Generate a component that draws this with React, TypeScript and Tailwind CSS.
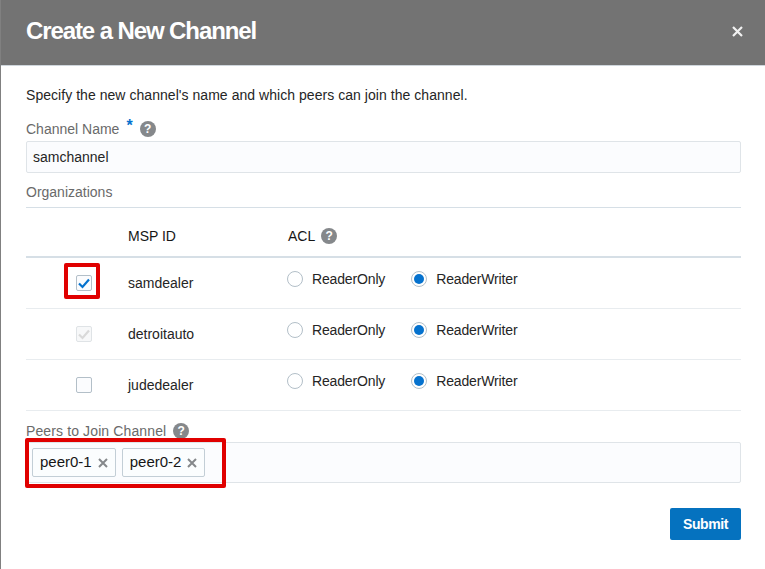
import React from 'react';

const orgs = [
  { name: 'samdealer', state: 'on', marked: true },
  { name: 'detroitauto', state: 'disabled', marked: false },
  { name: 'judedealer', state: 'off', marked: false },
];

function Help({ ml = 'ml-[7px]' }: { ml?: string }) {
  return (
    <span className={ml + ' flex h-4 w-4 items-center justify-center rounded-full bg-[#85888b] text-[12px] leading-none font-bold text-white'}>
      ?
    </span>
  );
}

function Check({ color }: { color: string }) {
  return (
    <svg width="14" height="14" viewBox="0 0 14 14" fill="none">
      <path d="M2 7.5 L5.5 11 L12 3.5" stroke={color} strokeWidth="2.2" />
    </svg>
  );
}

function Radio({ label, checked }: { label: string; checked?: boolean }) {
  return (
    <div className="flex items-center gap-[9px]">
      <span className="flex h-4 w-4 items-center justify-center rounded-full border border-[#b3bfc8] bg-white">
        {checked && <span className="h-[10px] w-[10px] rounded-full bg-[#0572ce]" />}
      </span>
      <span className="text-[14px] leading-4 tracking-[-0.15px] text-[#252525]">{label}</span>
    </div>
  );
}

function Tag({ label }: { label: string }) {
  return (
    <span className="flex h-[29px] items-center rounded-[2px] border border-[#c3ced6] bg-[#fbfdfe] pl-[7px] pr-[7px] text-[15px] text-[#161616]">
      {label}
      <svg className="ml-[6px]" width="10" height="10" viewBox="0 0 10 10" fill="none">
        <path d="M1 1 L9 9 M9 1 L1 9" stroke="#85888b" strokeWidth="2" />
      </svg>
    </span>
  );
}

export default function App() {
  return (
    <div className="h-[569px] w-[765px] overflow-hidden border-l border-[#808080] bg-white font-['Liberation_Sans',Arial,sans-serif]">
      <div className="flex h-[66px] items-center justify-between border-b border-[#cfd6dc] bg-[#737373] pl-[25px] pr-[22px]">
        <h1 className="mb-[4px] text-[24px] font-bold tracking-[-1.1px] text-white">Create a New Channel</h1>
        <svg className="mb-[2px]" width="11" height="11" viewBox="0 0 11 11" fill="none">
          <path d="M1 1 L10 10 M10 1 L1 10" stroke="#f2f2f2" strokeWidth="2.2" />
        </svg>
      </div>

      <div className="pl-[25px] pr-[24px]">
        <p className="mt-[20px] text-[14px] leading-[18px] tracking-[0.045px] text-[#252525]">
          Specify the new channel's name and which peers can join the channel.
        </p>

        <div className="mt-[17px] flex h-4 items-center text-[14px] text-[#6a6a6a]">
          Channel Name
          <span className="relative -top-[3px] ml-[7px] text-[16px] font-bold text-[#0572ce]">*</span>
          <Help ml="ml-[7px]" />
        </div>
        <div className="mt-[4px] flex h-[32px] items-center rounded-[2px] border border-[#dfe4e8] bg-[#fbfcfe] pl-[6px] text-[14px] text-[#252525]">
          samchannel
        </div>

        <div className="mt-[11px] h-[24px] border-b border-[#d6dfe6] text-[14px] leading-4 text-[#6a6a6a]">
          Organizations
        </div>

        <div className="flex h-[50px] items-center border-b-2 border-[#d6dfe6] pt-[8px] text-[14px] text-[#161616]">
          <span className="ml-[102px] w-[160px]">MSP ID</span>
          <span className="flex items-center">
            ACL
            <Help ml="ml-[6px]" />
          </span>
        </div>

        {orgs.map((org) => (
          <div key={org.name} className="relative flex h-[51px] items-center border-b border-[#e8ecef]">
            <span
              className={
                org.state === 'disabled'
                  ? 'ml-[50px] flex h-4 w-4 items-center justify-center rounded-[2px] border border-[#dfe3e6] bg-[#f7f8f9]'
                  : 'ml-[50px] flex h-4 w-4 items-center justify-center rounded-[2px] border border-[#b3bfc8] bg-[#fbfcfe]'
              }
            >
              {org.state === 'on' && <Check color="#0572ce" />}
              {org.state === 'disabled' && <Check color="#d9d9d9" />}
            </span>
            <span className="ml-[36px] w-[160px] text-[14px] text-[#252525]">{org.name}</span>
            <div className="-mt-[9px] -ml-[1px] flex gap-[26px]">
              <Radio label="ReaderOnly" />
              <Radio label="ReaderWriter" checked />
            </div>
            {org.marked && (
              <span className="absolute left-[38px] top-[5px] h-9 w-9 rounded-[2px] border-4 border-[#e00000]" />
            )}
          </div>
        ))}

        <div className="relative">
          <div className="mt-[12px] flex h-4 items-center text-[14px] tracking-[0.12px] text-[#6a6a6a]">
            Peers to Join Channel
            <Help />
          </div>
          <div className="mt-[3px] flex h-[41px] items-center gap-[6px] rounded-[2px] border border-[#dfe4e8] bg-[#fbfcfe] pl-[5px]">
            <Tag label="peer0-1" />
            <Tag label="peer0-2" />
          </div>
          <span className="absolute -left-[1px] top-[15px] h-[50px] w-[201px] rounded-[2px] border-4 border-[#e00000]" />
        </div>

        <div className="mt-[25px] flex justify-end">
          <button className="h-[32px] w-[71px] rounded-[2px] bg-[#0572bf] text-[14px] font-bold tracking-[-0.4px] text-white">
            Submit
          </button>
        </div>
      </div>
    </div>
  );
}
